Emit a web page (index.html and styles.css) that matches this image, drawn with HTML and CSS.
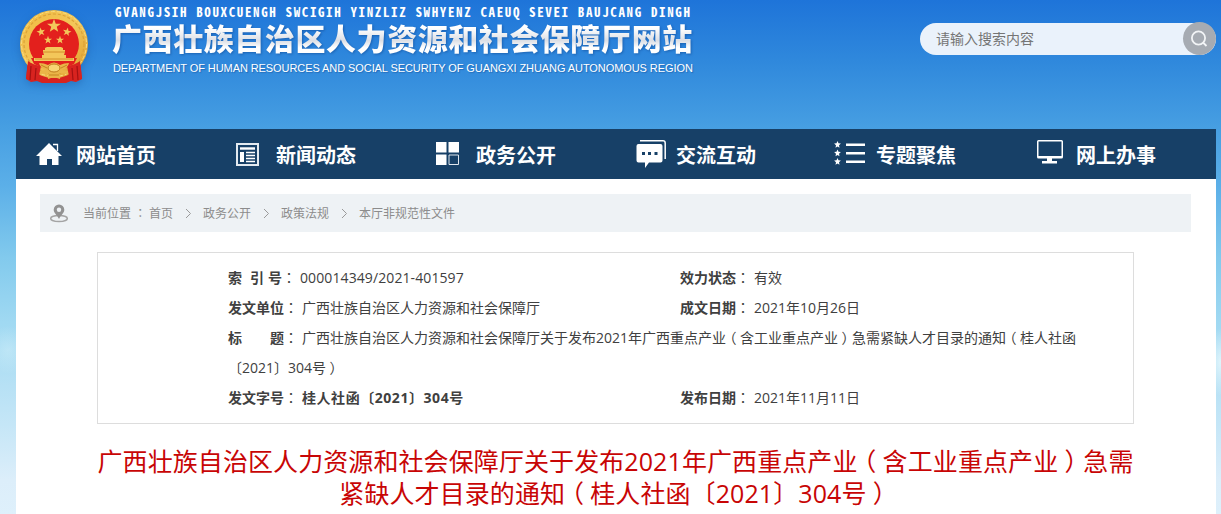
FILE: index.html
```html
<!DOCTYPE html>
<html lang="zh-CN">
<head>
<meta charset="utf-8">
<title>广西壮族自治区人力资源和社会保障厅网站</title>
<link rel="stylesheet" href="styles.css">
</head>
<body>

<div class="wrap">
	<header class="header">
		<svg class="emblem" width="70" height="76" viewBox="0 0 70 76">
			<defs>
				<linearGradient id="gold" x1="0" y1="0" x2="1" y2="1">
					<stop offset="0" stop-color="#f0b93e"/><stop offset=".5" stop-color="#f3c75a"/><stop offset="1" stop-color="#dd9a26"/>
				</linearGradient>
				<path id="star" d="M0-5L1.2-1.6 4.8-1.5 1.9.6 2.9 4 0 2-2.9 4-1.9.6-4.8-1.5-1.2-1.6z"/>
			</defs>
			<path d="M9 50L7 70l5 3 6-1 5 2h24l5-2 5 1 6-3-2-20z" fill="#d8231f"/>
			<circle cx="35" cy="35" r="34" fill="url(#gold)"/>
			<circle cx="35" cy="35" r="30" fill="none" stroke="#dca238" stroke-width="1.200" stroke-dasharray="3 2"/>
			<circle cx="35" cy="35" r="32.500" fill="none" stroke="#f9dc80" stroke-width="1" stroke-dasharray="4 2"/>
			<circle cx="35" cy="35" r="25" fill="#e3201d"/>
			<path d="M12 49h46l-3 6-9 4H24l-9-4z" fill="#e3201d"/>
			<path d="M9 52q5 4 13 5l-3 15-12-2zM61 52q-5 4-13 5l3 15 12-2z" fill="#d8231f"/>
			<path d="M12 57l-1 14M17 59l-1 12M58 57l1 14M53 59l1 12" stroke="#a51212" stroke-width="1.200"/>
			<g fill="#f3c75a">
				<use href="#star" transform="translate(35 17) scale(1.450)"/>
				<use href="#star" transform="translate(22 23) rotate(-12) scale(.9)"/>
				<use href="#star" transform="translate(48 23) rotate(12) scale(.9)"/>
				<use href="#star" transform="translate(29 31) scale(.85)"/>
				<use href="#star" transform="translate(41 31) scale(.85)"/>
				<path d="M26 39l2-1h14l2 1v2h2v2l-1 3h2v3h8v3H15v-3h8v-3h2l-1-3v-2h2z"/>
			</g>
			<path d="M24 43h22M16 50h38" stroke="#c98420" stroke-width=".8"/>
			<path d="M20 54q5 0 9 2 6-5 12 0 4-2 9-2-1 5-7 7l6 1v3l-9-1q2 3 1 6-6-3-12 0-1-3 1-6l-9 1v-3l6-1q-6-2-7-7z" fill="#eab548"/>
			<ellipse cx="35" cy="59" rx="6" ry="4" fill="#f7d573" stroke="#bd7a1c"/>
			<path d="M22 56l6 3M48 56l-6 3M30 66h10" stroke="#c78420"/>
		</svg>
		<div class="site">
			<div class="site-za">GVANGJSIH BOUXCUENGH SWCIGIH YINZLIZ SWHYENZ CAEUQ SEVEI BAUJCANG DINGH</div>
			<div class="site-zh">广西壮族自治区人力资源和社会保障厅网站</div>
			<div class="site-en">DEPARTMENT OF HUMAN RESOURCES AND SOCIAL SECURITY OF GUANGXI ZHUANG AUTONOMOUS REGION</div>
		</div>
		<form class="search">
			<input class="search-text" type="text" placeholder="请输入搜索内容">
			<button class="search-btn" type="button">
				<svg width="33" height="33" viewBox="0 0 33 33" fill="none" stroke="#f2f4f6" stroke-width="1.8"><circle cx="15.500" cy="16" r="6.600"/><path d="M20 20.500l3.500 3.500"/></svg>
			</button>
		</form>
	</header>

	<nav class="nav">
		<a class="nav-item" href="#"><svg class="nav-icon" viewBox="0 0 32 32" fill="#fff"><path d="M0 17L13 4l13 13h-3.500v9H16v-6h-5v6H3.500v-9z"/><path d="M17 5.500h4.500V12" fill="none" stroke="#fff" stroke-width="1.300"/></svg>网站首页</a>
		<a class="nav-item" href="#"><svg class="nav-icon" viewBox="0 0 32 32" fill="none" stroke="#fff"><path d="M1 5h21v21H1z" stroke="#e3eaf0" stroke-width="2"/><path d="M4 9.500h15" stroke-width="2.400"/><path d="M6 13v10" stroke-width="4"/><path d="M10 13.500h9M10 16.500h9M10 19.500h9M10 22.500h9" stroke-width="1.400"/></svg>新闻动态</a>
		<a class="nav-item" href="#"><svg class="nav-icon" viewBox="0 0 32 32" fill="#fff"><path d="M0 3h10.500v10.500H0zM12.500 3H23v10.500H12.500zM0 15.500h10.500V26H0z"/><path d="M13 16h9.500v9.500H13z" fill="none" stroke="#dfe6ed"/></svg>政务公开</a>
		<a class="nav-item" href="#"><svg class="nav-icon" viewBox="0 0 32 32" fill="#fff"><path d="M2.500 5h22q2 0 2 2v14.500q0 2-2 2H13L9 29v-5.500H2.500q-2 0-2-2V7q0-2 2-2z"/><path d="M4 1.700h23q2.200 0 2.200 2.200V20" fill="none" stroke="#fff" stroke-width="1.500"/><path d="M6 13h3v3H6zM12 13h3v3h-3zM18.500 13h3v3h-3z" fill="#174067"/></svg>交流互动</a>
		<a class="nav-item" href="#"><svg class="nav-icon nav-icon-list" viewBox="0 0 32 32" fill="#fff"><path d="M11 4.500h19v2.500H11zM11 13h19v2.500H11zM11 21.500h19V24H11z"/><path id="dot" d="M2.500 2l1 2.300 2.400.2L4 6.200l.5 2.500-2-1.300-2 1.300.5-2.500L-.9 4.500l2.400-.2z"/><use href="#dot" y="8.500"/><use href="#dot" y="17"/></svg>专题聚焦</a>
		<a class="nav-item" href="#"><svg class="nav-icon" viewBox="0 0 32 32" fill="#fff"><path d="M2.500 1h23q1.500 0 1.500 1.500V18q0 1.500-1.500 1.500H16V22h5v2.500H6V22h5v-2.500H2.500Q1 19.500 1 18V2.500Q1 1 2.500 1zm0 1.500V17h23V2.500z" fill-rule="evenodd"/></svg>网上办事</a>
	</nav>

	<main class="main">
		<div class="crumbs">
			<svg class="pin" width="20" height="19" viewBox="0 0 20 19"><ellipse cx="10" cy="14.500" rx="8.300" ry="3" fill="none" stroke="#a4a4a4" stroke-width="1.500"/><path d="M10 .5a5.300 5.300 0 0 1 5.300 5.300C15.300 9 12 11 10 15 8 11 4.700 9 4.700 5.800A5.300 5.300 0 0 1 10 .5z" fill="#929292"/><circle cx="10" cy="5.800" r="2.200" fill="#eef2f5"/></svg>
			<span class="crumbs-label">当前位置 <span lang="zh-TW">：</span></span>
			<a href="#">首页</a>
			<svg class="sep" width="7" height="11" viewBox="0 0 7 11"><path d="M1 1l4.500 4.500L1 10"/></svg>
			<a href="#">政务公开</a>
			<svg class="sep" width="7" height="11" viewBox="0 0 7 11"><path d="M1 1l4.500 4.500L1 10"/></svg>
			<a href="#">政策法规</a>
			<svg class="sep" width="7" height="11" viewBox="0 0 7 11"><path d="M1 1l4.500 4.500L1 10"/></svg>
			<a href="#">本厅非规范性文件</a>
		</div>

		<div class="info">
			<div><b class="label index"><span>索</span><span>引</span><span>号</span><i lang="zh-TW">：</i></b><span class="number">000014349/2021-401597</span></div>
			<div><b class="label">效力状态<i lang="zh-TW">：</i></b>有效</div>
			<div><b class="label">发文单位<i lang="zh-TW">：</i></b>广西壮族自治区人力资源和社会保障厅</div>
			<div><b class="label">成文日期<i lang="zh-TW">：</i></b>2021年10月26日</div>
			<div class="full"><b class="label">标&#12288;&#12288;题<i lang="zh-TW">：</i></b>广西壮族自治区人力资源和社会保障厅关于发布2021年广西重点产业<span class="br">（</span>含工业重点产业<span class="br">）</span>急需紧缺人才目录的通知<span class="br">（</span>桂人社函<br>〔2021〕304号<span class="br">）</span></div>
			<div><b class="label">发文字号<i lang="zh-TW">：</i></b><b class="doc-no">桂人社函〔2021〕304号</b></div>
			<div><b class="label">发布日期<i lang="zh-TW">：</i></b>2021年11月11日</div>
		</div>

		<h1 class="title">广西壮族自治区人力资源和社会保障厅关于发布2021年广西重点产业<span class="br">（</span>含工业重点产业<span class="br">）</span>急需<br>紧缺人才目录的通知<span class="br">（</span>桂人社函〔2021〕304号<span class="br">）</span></h1>
	</main>
</div>

</body>
</html>
```
FILE: styles.css
```css
* { box-sizing: border-box; }
body {
	margin: 0; height: 514px; overflow: hidden;
	font: 14px/30px 'Open Sans', 'Noto Sans CJK SC', sans-serif; color: #404040;
	background:
		radial-gradient(ellipse 22px 24px at 8px 350px, rgba(225,247,252,.35), transparent),
		radial-gradient(ellipse 16px 34px at 1221px 362px, rgba(240,252,254,.75), transparent),
		linear-gradient(#1e74d9 0, #2f88dc 60px, #479fe2 129px, #5bafe8 185px, #82caed 258px, #a0d9f2 322px, #b1dff4 370px, #c5e6f7 425px, #dceefa 480px, #def0fb 514px);
}
a { color: inherit; text-decoration: none; }
.wrap { width: 1200px; margin-left: 16px; }

/* header */
.header { display: flex; align-items: flex-start; height: 129px; }
.emblem { margin: 9px 0 0 3px; filter: drop-shadow(0 3px 4px rgba(10,60,130,.3)); }
.site { width: 620px; margin: 4px 0 0 24px; color: #fff; white-space: nowrap; }
.site-za { padding-left: 2px; font: bold 13px/16px 'Noto Sans CJK SC', monospace; font-feature-settings: 'hwid'; letter-spacing: 1.62px; }
.site-zh {
	font: 900 30px/36px 'Noto Sans CJK SC', sans-serif; letter-spacing: .57px; margin: -1px 0 0 -1px;
	background: linear-gradient(#fff 25%, #dcdfe5 60%, #fff 80%); -webkit-background-clip: text; background-clip: text; color: transparent;
	filter: drop-shadow(1px 1px 1px rgba(10,60,130,.45));
}
.site-en { font: 11px/14px 'Liberation Sans', sans-serif; letter-spacing: -.08px; margin: 6px 0 0; text-shadow: 1px 1px 1px rgba(10,60,130,.4); }
.search { display: flex; width: 296px; height: 32px; margin: 23px 0 0 auto; background: #eaf2fb; border-radius: 16px; }
.search-text { flex: 1; min-width: 0; padding: 0 16px 2px; border: 0; background: none; outline: none; font: 14px 'Noto Sans CJK SC', sans-serif; }
.search-text::placeholder { color: #757575; }
.search-btn { width: 33px; height: 33px; margin-top: -1px; padding: 0; border: 0; border-radius: 50%; background: #a6abb2; }
.search-btn svg { display: block; }

/* navigation */
.nav { display: flex; height: 50px; background: #174067; }
.nav-item { display: flex; width: 200px; padding-left: 20px; color: #fff; font-size: 20px; font-weight: bold; line-height: 53px; }
.nav-icon { width: 32px; height: 32px; margin: 10px 8px 0 0; overflow: visible; }
.nav-icon-list { margin-left: -1px; margin-right: 9px; }

/* content */
.main { height: 335px; padding: 15px 25px 0 24px; background: #fff; }
.crumbs { display: flex; align-items: center; height: 38px; padding-left: 9px; background: #eef2f5; color: #8c8c8c; font-size: 12px; line-height: 18px; }
.crumbs a, .crumbs-label { padding-top: 1px; }
.pin { margin-right: 14px; }
.crumbs-label { width: 66px; white-space: nowrap; }
.sep { margin: 0 11px 0 12px; fill: none; stroke: #9a9a9a; }
.info {
	display: grid; grid-template-columns: 452px 1fr; align-content: start; width: 1037px; height: 172px;
	margin: 20px 0 0 57px; padding: 9px 0 0 130px; border: 1px solid #ddd; white-space: nowrap;
}
.info div { height: 30px; }
.info .full { grid-column: 1 / 3; height: 60px; }
.label { margin-right: 4px; }
.label i { font-style: normal; font-weight: normal; font-family: 'Noto Sans CJK TC', sans-serif; }
.crumbs-label span { font-family: 'Noto Sans CJK TC', sans-serif; }
.index span { margin-right: 4px; }
.index span:first-child { margin-right: 8px; }
.index span:nth-child(3) { margin-right: 0; }
.number { letter-spacing: .1px; }
.doc-no { letter-spacing: .55px; }
/* half-width brackets centred in a full-width cell */
.br { padding: 0 .25em; font-family: 'Noto Sans CJK SC', sans-serif; font-feature-settings: 'halt'; line-height: 1; }
.title { width: 1037px; margin: 21px 0 0 57px; color: #c80505; font-size: 25px; font-weight: normal; line-height: 32px; letter-spacing: .09px; text-align: center; white-space: nowrap; }
```
